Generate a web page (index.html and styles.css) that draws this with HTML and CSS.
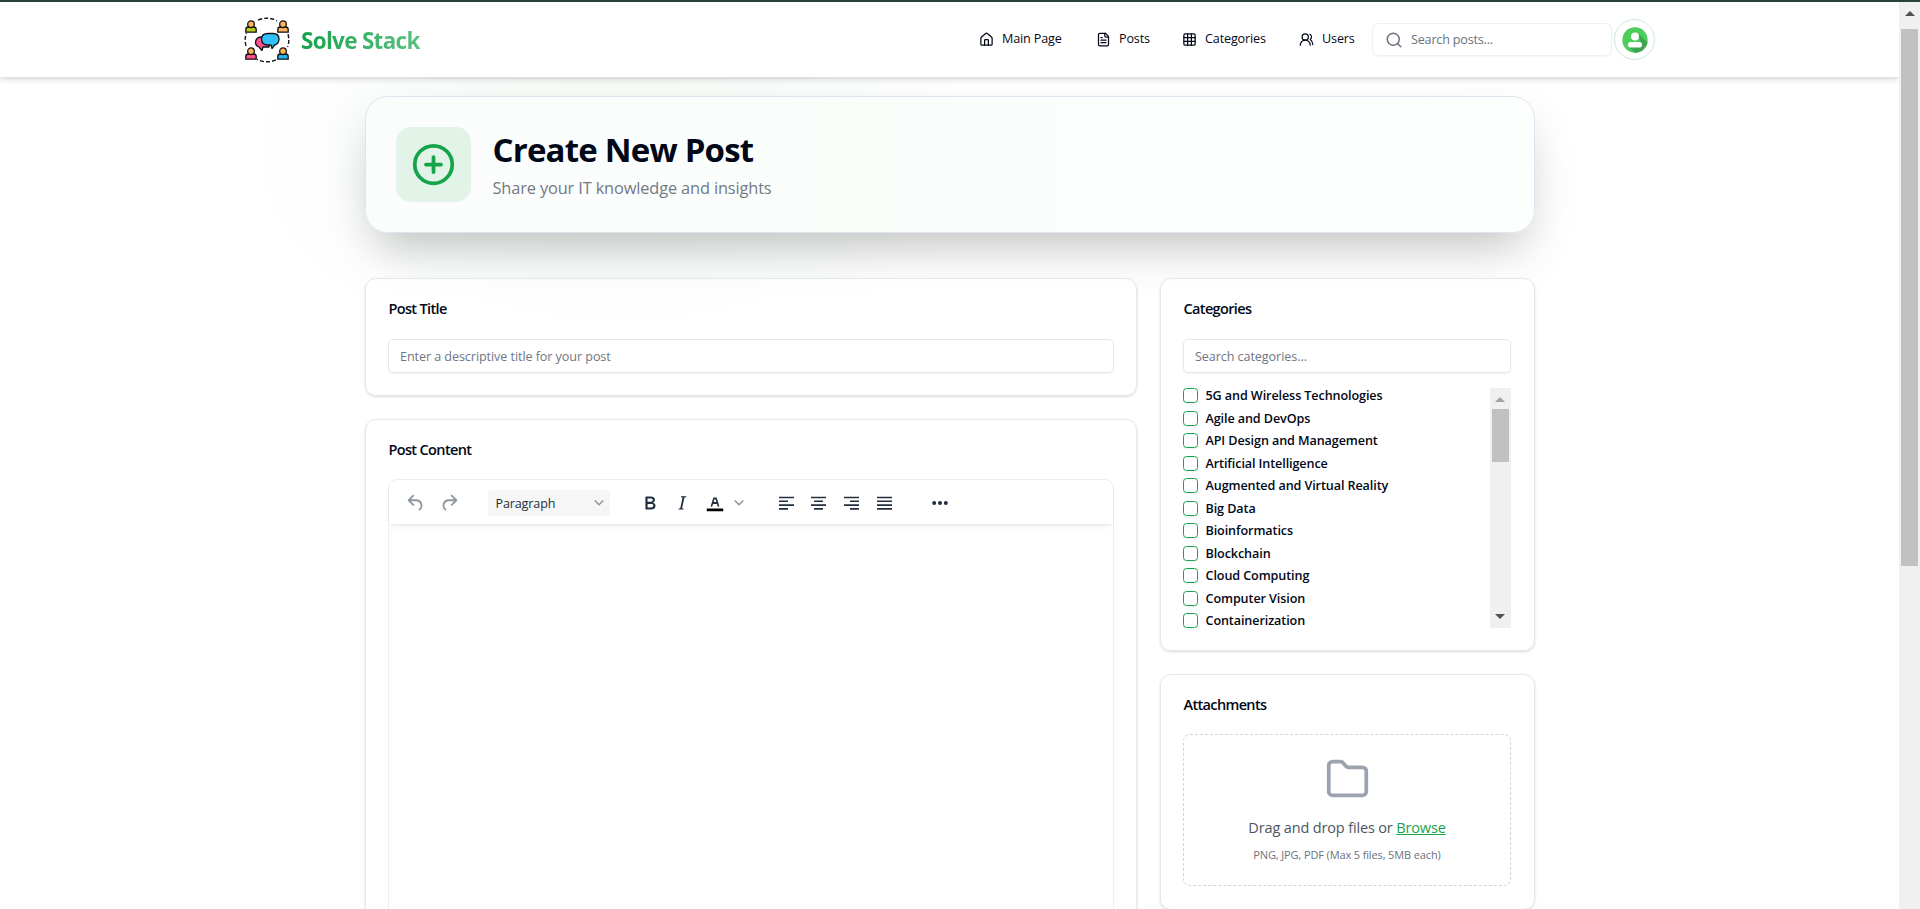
FILE: index.html
```
<!DOCTYPE html>
<html lang="en">
<head>
<meta charset="utf-8">
<title>Solve Stack</title>
<link rel="stylesheet" href="styles.css">
</head>
<body>
<svg class="defs" width="0" height="0">
  <symbol id="person" viewBox="0 0 12 13"><path d="M.8 12.200V9.500Q.8 7 3.500 7H8.500Q11.200 7 11.200 9.500V12.200Z" fill="currentColor" stroke="#111" stroke-width="1.300"/><circle cx="6" cy="4.200" r="3.300" fill="#fdb55b" stroke="#111" stroke-width="1.300"/></symbol>
</svg>
<div class="strip"></div>
<div class="window">
  <div class="page">
    <header class="header">
      <div class="brand">
        <svg class="logo" viewBox="0 0 46 46">
          <circle cx="23" cy="23" r="21.800" fill="none" stroke="#111" stroke-width="1.400" stroke-dasharray="4 2.200"/>
          <g fill="#fff"><rect x="0" y="3" width="13" height="13"/><rect x="33" y="3" width="13" height="13"/><rect x="0" y="30" width="13" height="13"/><rect x="33" y="30" width="13" height="13"/></g>
          <use href="#person" x="1" y="3" width="12" height="13" color="#b5cc18"/>
          <use href="#person" x="33" y="3" width="12" height="13" color="#fdb55b"/>
          <use href="#person" x="1" y="30" width="12" height="13" color="#ff5490"/>
          <use href="#person" x="33" y="30" width="12" height="13" color="#22b7f2"/>
          <path d="M18 20H25V30H19L18 33.500L15 30Q11.500 29 11.500 25Q12 20 18 20Z" fill="#ff5490" stroke="#111" stroke-width="1.300" stroke-linejoin="round"/>
          <path d="M24 16.500H29Q35 16.500 35 22Q35 27 30.500 28L28 31.500L27 28H24Q17.500 28 17.500 22Q17.500 16.500 24 16.500Z" fill="#2fc1f7" stroke="#111" stroke-width="1.300" stroke-linejoin="round"/>
        </svg>
        <span class="brand-name">Solve Stack</span>
      </div>
      <nav class="nav">
        <a class="nav-item"><svg class="icon" viewBox="0 0 24 24"><path d="M15 21v-8a1 1 0 0 0-1-1h-4a1 1 0 0 0-1 1v8"/><path d="M3 10a2 2 0 0 1 .709-1.528l7-5.999a2 2 0 0 1 2.582 0l7 5.999A2 2 0 0 1 21 10v9a2 2 0 0 1-2 2H5a2 2 0 0 1-2-2z"/></svg><span>Main Page</span></a>
        <a class="nav-item"><svg class="icon" viewBox="0 0 24 24"><path d="M15 2H6a2 2 0 0 0-2 2v16a2 2 0 0 0 2 2h12a2 2 0 0 0 2-2V7Z"/><path d="M14 2v4a2 2 0 0 0 2 2h4M10 9H8M16 13H8M16 17H8"/></svg><span>Posts</span></a>
        <a class="nav-item"><svg class="icon" viewBox="0 0 24 24"><rect width="18" height="18" x="3" y="3" rx="2"/><path d="M3 9h18M3 15h18M9 3v18M15 3v18"/></svg><span>Categories</span></a>
        <a class="nav-item"><svg class="icon" viewBox="0 0 24 24"><path d="M18 21a8 8 0 0 0-16 0"/><circle cx="10" cy="8" r="5"/><path d="M22 20c0-3.370-2-6.500-4-8a5 5 0 0 0-.450-8.300"/></svg><span>Users</span></a>
        <div class="search"><svg viewBox="0 0 24 24"><circle cx="11" cy="11" r="8"/><path d="m21 21-4.300-4.300"/></svg><span>Search posts...</span></div>
        <div class="avatar"><svg viewBox="0 0 26 26"><defs><clipPath id="disc"><circle cx="13" cy="13" r="12.700"/></clipPath></defs><g clip-path="url(#disc)"><rect width="26" height="26" fill="#4bce5b"/><path d="M16 6L26 16V26H13L6 19L19 18Z" fill="#40a351"/></g><circle cx="13" cy="9.500" r="4" fill="#fff"/><rect x="6" y="15" width="14" height="5.600" rx="2.800" fill="#fff"/></svg></div>
      </nav>
    </header>
    <main class="main">
      <section class="hero">
        <div class="hero-icon"><svg viewBox="0 0 24 24"><circle cx="12" cy="12" r="10"/><path d="M8 12h8M12 8v8"/></svg></div>
        <div class="hero-text">
          <h1 class="hero-title">Create New Post</h1>
          <p class="hero-sub">Share your IT knowledge and insights</p>
        </div>
      </section>
      <div class="columns">
        <div class="column">
          <section class="card title-card">
            <h2>Post Title</h2>
            <div class="input"><span>Enter a descriptive title for your post</span></div>
          </section>
          <section class="card content-card">
            <h2>Post Content</h2>
            <div class="editor">
              <div class="toolbar">
                <svg class="tool faded undo" viewBox="0 0 24 24"><path d="M6.400 8H12c3.700 0 6.200 2 6.800 5.100.6 2.700-.4 5.600-2.300 6.800a1 1 0 0 1-1-1.800c1.100-.6 1.800-2.700 1.400-4.600-.5-2.100-2.100-3.500-4.900-3.500H6.400l3.300 3.300a1 1 0 1 1-1.400 1.400l-5-5a1 1 0 0 1 0-1.400l5-5a1 1 0 0 1 1.400 1.400L6.400 8Z"/></svg>
                <svg class="tool faded redo" viewBox="0 0 24 24"><path d="M17.600 10H12c-2.800 0-4.400 1.400-4.900 3.500-.4 2 .3 4 1.400 4.600a1 1 0 1 1-1 1.800c-2-1.200-2.900-4.100-2.300-6.800.6-3 3-5.100 6.800-5.100h5.600l-3.300-3.300a1 1 0 1 1 1.400-1.400l5 5a1 1 0 0 1 0 1.400l-5 5a1 1 0 0 1-1.400-1.400l3.300-3.300Z"/></svg>
                <div class="select"><span>Paragraph</span><svg class="chev" viewBox="0 0 10 10"><path d="M.8 2.500 5 6.800 9.200 2.500"/></svg></div>
                <svg class="tool bold" viewBox="0 0 24 24"><path d="M7.800 19c-.3 0-.5 0-.6-.2l-.2-.5V5.700c0-.2 0-.4.2-.5l.6-.2h5c1.500 0 2.700.3 3.500 1 .7.600 1.100 1.400 1.100 2.500a3 3 0 0 1-.6 1.900c-.4.6-1 1-1.600 1.200.4.100.9.300 1.300.6s.8.700 1 1.200c.4.400.5 1 .5 1.600 0 1.300-.4 2.300-1.300 3-.8.700-2.100 1-3.800 1H7.800Zm5-8.300c.6 0 1.200-.1 1.600-.5.4-.3.6-.7.6-1.300 0-1.100-.8-1.700-2.300-1.700H9.300v3.500h3.400Zm.5 6c.7 0 1.300-.1 1.700-.4.4-.4.6-.9.6-1.500s-.2-1-.7-1.400c-.4-.3-1-.4-2-.4H9.400v3.800h4Z"/></svg>
                <svg class="tool italic" viewBox="0 0 24 24"><path d="m16.700 4.700-.1.900h-.3c-.6 0-1 0-1.400.3-.3.300-.4.600-.5 1.100l-2.100 9.800v.6c0 .5.400.8 1.400.8h.2l-.2.800H8l.2-.8h.2c1.100 0 1.800-.5 2-1.500l2-9.800.1-.5c0-.6-.4-.8-1.400-.8h-.3l.2-.9h5.700Z"/></svg>
                <svg class="tool color" viewBox="0 0 24 24"><path d="M3 18h18v3H3z" fill="#000"/><path d="M8.700 16h-.8a.5.5 0 0 1-.5-.6l2.700-9c.1-.3.3-.4.500-.4h2.800c.2 0 .4.100.5.400l2.700 9a.5.5 0 0 1-.5.600h-.8a.5.5 0 0 1-.4-.4l-.7-2.200c0-.3-.3-.4-.5-.4h-3.400c-.2 0-.4.100-.5.400l-.7 2.200c0 .3-.2.400-.4.400Zm2.600-7.600-.6 2a.5.5 0 0 0 .5.600h1.600a.5.5 0 0 0 .5-.6l-.6-2c0-.3-.3-.4-.5-.4h-.4c-.2 0-.4.100-.5.400Z"/></svg>
                <svg class="chev color-chev" viewBox="0 0 10 10"><path d="M.8 2.500 5 6.800 9.200 2.500"/></svg>
                <svg class="align" viewBox="0 0 15 14"><path d="M0 1.500h15M0 5.300h9M0 9.100h15M0 12.900h9"/></svg>
                <svg class="align" viewBox="0 0 15 14"><path d="M0 1.500h15M3 5.300h9M0 9.100h15M3 12.900h9"/></svg>
                <svg class="align" viewBox="0 0 15 14"><path d="M0 1.500h15M6 5.300h9M0 9.100h15M6 12.900h9"/></svg>
                <svg class="align" viewBox="0 0 15 14"><path d="M0 1.500h15M0 5.300h15M0 9.100h15M0 12.900h15"/></svg>
                <svg class="more" viewBox="0 0 16 6"><circle cx="2.200" cy="3" r="2"/><circle cx="8" cy="3" r="2"/><circle cx="13.800" cy="3" r="2"/></svg>
              </div>
            </div>
          </section>
        </div>
        <div class="column">
          <section class="card cat-card">
            <h2>Categories</h2>
            <div class="input"><span>Search categories...</span></div>
            <div class="cat-box">
              <ul class="cat-list">
                <li><i class="check"></i><span>5G and Wireless Technologies</span></li>
                <li><i class="check"></i><span>Agile and DevOps</span></li>
                <li><i class="check"></i><span>API Design and Management</span></li>
                <li><i class="check"></i><span>Artificial Intelligence</span></li>
                <li><i class="check"></i><span>Augmented and Virtual Reality</span></li>
                <li><i class="check"></i><span>Big Data</span></li>
                <li><i class="check"></i><span>Bioinformatics</span></li>
                <li><i class="check"></i><span>Blockchain</span></li>
                <li><i class="check"></i><span>Cloud Computing</span></li>
                <li><i class="check"></i><span>Computer Vision</span></li>
                <li><i class="check"></i><span>Containerization</span></li>
              </ul>
              <div class="bar"><i class="arrow up dim"></i><i class="thumb"></i><i class="arrow down"></i></div>
            </div>
          </section>
          <section class="card att-card">
            <h2>Attachments</h2>
            <div class="drop">
              <svg viewBox="0 0 24 24"><path d="M22 19a2 2 0 0 1-2 2H4a2 2 0 0 1-2-2V5a2 2 0 0 1 2-2h4.500c1.500 0 2 3 4 3H20a2 2 0 0 1 2 2z"/></svg>
              <p class="drop-text">Drag and drop files or <a>Browse</a></p>
              <p class="drop-note">PNG, JPG, PDF (Max 5 files, 5MB each)</p>
            </div>
          </section>
        </div>
      </div>
    </main>
  </div>
  <div class="bar window-bar"><i class="arrow up"></i><i class="thumb"></i></div>
</div>
</body>
</html>
```

FILE: styles.css
```
* { box-sizing: border-box; }
body { margin: 0; height: 909px; overflow: hidden; background: #fff; color: #020817; font: 12.600px/20px "Open Sans", "Noto Sans", sans-serif; }
h1, h2, p, ul { margin: 0; padding: 0; }
svg { display: block; flex: none; }
span, a, h1, h2, p { white-space: nowrap; }
.defs { position: absolute; }
.strip { height: 2px; background: #29423e; }
.window { display: flex; height: 907px; }
.page { width: 1899px; height: 907px; overflow: hidden; background: radial-gradient(ellipse 380px 220px at 620px 150px, rgba(34, 160, 74, .06), rgba(34, 160, 74, 0) 100%); }

.header { position: relative; display: flex; justify-content: space-between; height: 75px; padding: 0 244px 0 244px; align-items: center; background: rgba(255, 255, 255, .95); box-shadow: 0 2px 6px rgba(0, 0, 0, .18); }
.brand { display: flex; align-items: center; gap: 11px; }
.logo { width: 46px; height: 46px; }
.brand-name { padding-top: 2px; font-size: 22.500px; font-weight: 700; line-height: 30px; letter-spacing: -.7px; color: transparent; background: linear-gradient(90deg, #16a34a, #5cc083); -webkit-background-clip: text; background-clip: text; }
.nav { display: grid; grid-template-columns: 117px 86px 117px 73px 240px 43px; align-items: center; }
.nav .avatar { margin-left: 2px; }
.nav-item { display: flex; align-items: center; gap: 8px; }
.icon { width: 15px; height: 15px; fill: none; stroke: #020817; stroke-width: 2; stroke-linecap: round; stroke-linejoin: round; }
.nav-item span { margin-top: -1px; letter-spacing: -.15px; }
.search { display: flex; align-items: center; gap: 8px; height: 33px; padding-left: 12px; border: 1px solid #f0f1f4; border-radius: 6px; box-shadow: 0 1px 2px rgba(0, 0, 0, .05); color: #6b7280; }
.search svg { width: 18px; height: 18px; fill: none; stroke: #6b7280; stroke-width: 2; stroke-linecap: round; }
.search span { padding-top: 1px; letter-spacing: -.2px; }
.avatar { display: flex; width: 41px; height: 41px; align-items: center; justify-content: center; border: 1.500px solid #c9ebd6; border-radius: 50%; }
.avatar svg { width: 26px; height: 26px; }

.main { width: 1170px; margin: 0 auto; padding-top: 19px; }
.hero { display: flex; align-items: center; gap: 22px; height: 137px; padding-left: 30px; border: 1px solid #dfe5ef; border-radius: 22.500px; background: linear-gradient(90deg, #fbfdfc, #fafefb 40%, #fdfefe); box-shadow: 0 23px 47px -11px rgba(0, 0, 0, .25); }
.hero-icon { display: flex; width: 75px; height: 75px; align-items: center; justify-content: center; border-radius: 15px; background: #e2f3e8; }
.hero-icon svg { width: 45px; height: 45px; fill: none; stroke: #16a34a; stroke-width: 2; stroke-linecap: round; }
.hero-text { padding-top: 3px; }
.hero-title { font-size: 33px; line-height: 36px; font-weight: 700; letter-spacing: -.8px; }
.hero-sub { margin-top: 7px; font-size: 16.400px; line-height: 26px; letter-spacing: -.15px; color: #747986; }

.columns { display: grid; grid-template-columns: 772px 375px; gap: 23px; margin-top: 45px; }
.column { display: flex; flex-direction: column; gap: 23px; }
.card { padding: 21px 23px 22px 22px; border: 1px solid #e2e8f0; border-radius: 11px; background: rgba(255, 255, 255, .5); box-shadow: 0 1px 3px rgba(0, 0, 0, .1), 0 1px 2px rgba(0, 0, 0, .05); }
.title-card { height: 118px; padding-right: 22px; }
.content-card { height: 520px; padding-right: 22px; }
.cat-card { height: 373px; }
.att-card { height: 236px; }
.card h2 { height: 39px; padding-left: 1px; font-size: 14.500px; line-height: 17px; font-weight: 600; letter-spacing: -.65px; }
.content-card h2, .att-card h2 { height: 38px; }
.input { display: flex; align-items: center; height: 34px; padding-left: 11.500px; border: 1px solid #e2e8f0; border-radius: 5px; background: rgba(255, 255, 255, .6); box-shadow: 0 1px 2px rgba(0, 0, 0, .05); color: #6f7582; }
.input span { padding-top: 1px; letter-spacing: -.08px; }

.editor { height: 460px; border: 1px solid #eee; border-radius: 9px; background: #fff; }
.toolbar { display: flex; align-items: center; height: 44px; padding: 2px 0 0 16px; border-radius: 9px 9px 0 0; box-shadow: 0 2px 3px -1px rgba(34, 47, 62, .09), 0 5px 8px -4px rgba(34, 47, 62, .08); }
.tool { width: 22px; height: 22px; fill: #222f3e; }
.faded { opacity: .5; }
.redo { margin-left: 11px; }
.select { display: flex; width: 122px; height: 26px; margin-left: 28px; padding: 0 6px 0 8px; align-items: center; justify-content: space-between; border-radius: 3px; background: #f6f6f6; color: #222f3e; }
.select span { padding-top: 1px; letter-spacing: -.15px; }
.chev { width: 10px; height: 10px; fill: none; stroke: #8b929b; stroke-width: 1.500; }
.bold { margin-left: 29px; }
.italic { margin-left: 10px; }
.color { margin-left: 11px; }
.color-chev { margin-left: 8px; margin-right: 3px; }
.align { width: 15px; height: 14px; margin-left: 17.700px; fill: none; stroke: #222f3e; stroke-width: 1.600; }
.color-chev + .align { margin-left: 32px; }
.more { width: 16px; height: 6px; margin-left: 40px; fill: #222f3e; }

.cat-box { display: flex; justify-content: space-between; height: 240px; margin-top: 15px; overflow: hidden; }
.cat-list { list-style: none; }
.cat-list li { display: flex; height: 22.500px; gap: 8px; align-items: flex-start; }
.cat-list li:last-child { height: 15px; }
.cat-list span { font-weight: 600; line-height: 16px; letter-spacing: -.1px; }
.check { width: 15px; height: 15px; border: 1px solid #16a34a; border-radius: 3.500px; box-shadow: 0 1px 2px rgba(0, 0, 0, .06); }
.bar { display: flex; flex-direction: column; align-items: center; width: 21px; background: #f0f0f0; }
.arrow { border: 5px solid transparent; }
.up { margin-top: 4px; border-bottom-color: #505050; }
.down { margin-top: auto; margin-bottom: 4px; border-top-color: #505050; }
.dim { border-bottom-color: #a3a3a3; }
.thumb { width: 17px; height: 53px; margin-top: 7px; background: #c1c1c1; }
.window-bar .thumb { height: 537px; margin-top: 13px; }

.drop { display: flex; flex-direction: column; align-items: center; height: 152px; padding: 21px 0 0 1px; border: 1px dashed #d1d5db; border-radius: 7px; }
.drop svg { width: 45px; height: 45px; fill: none; stroke: #9ca3af; stroke-width: 2; stroke-linejoin: round; }
.drop-text { margin-top: 16px; font-size: 14.500px; line-height: 22px; letter-spacing: -.15px; color: #4b5563; }
.drop-text a { color: #16a34a; text-decoration: underline; }
.drop-note { margin-top: 8px; font-size: 11px; line-height: 15px; letter-spacing: -.13px; color: #6b7280; }
```
